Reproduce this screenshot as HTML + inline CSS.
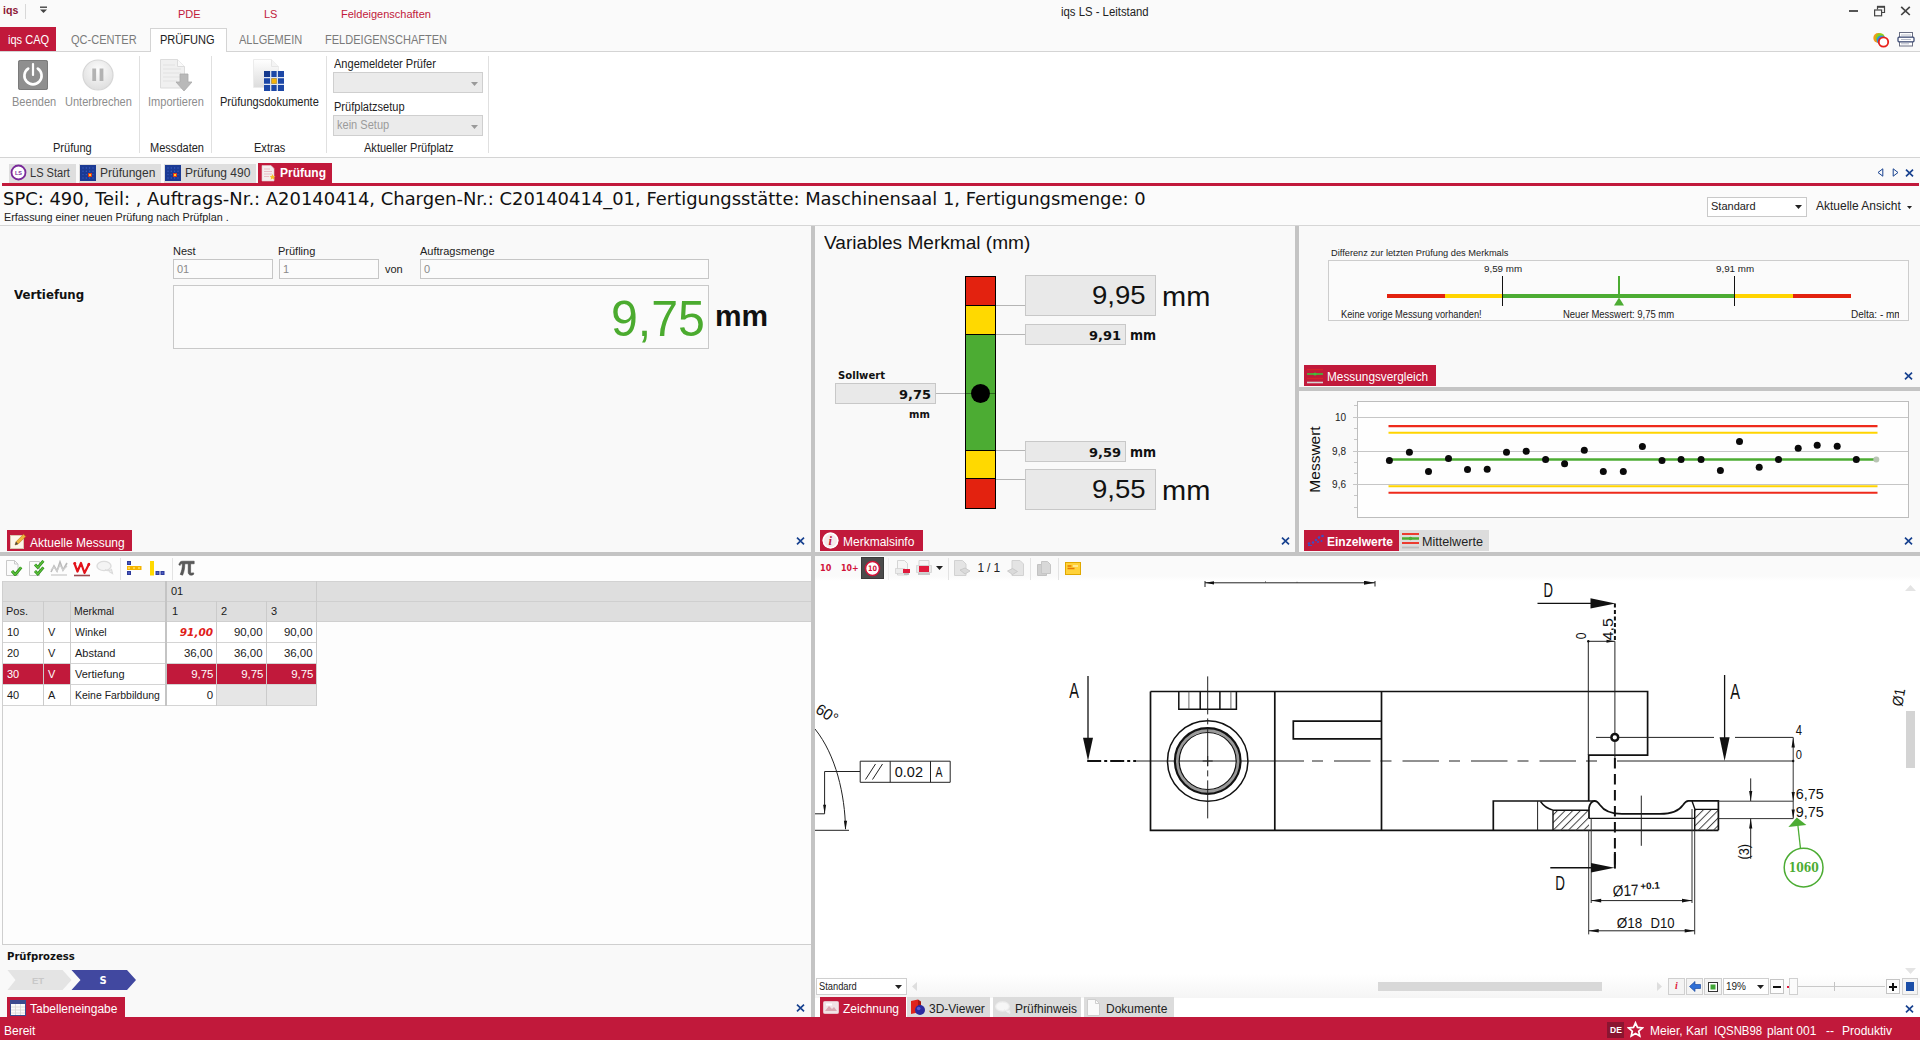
<!DOCTYPE html>
<html lang="de">
<head>
<meta charset="utf-8">
<title>iqs LS - Leitstand</title>
<style>
*{box-sizing:border-box;margin:0;padding:0}
html,body{width:1920px;height:1040px;overflow:hidden;background:#fbfbfb;font-family:"Liberation Sans",sans-serif;font-size:12px;color:#1a1a1a}
.a{position:absolute;white-space:nowrap}
.t{position:absolute;white-space:nowrap;line-height:1;transform-origin:0 0}
.crim{background:#c1193b}
.dj{font-family:"DejaVu Sans",sans-serif;font-weight:bold}
#ribbon .t,#ribbontabs .t{transform:scaleX(.92)}
.xb{position:absolute}

.split{position:absolute;background:#c4c4c4}
.x{position:absolute;width:9px;height:9px}
.ptab{position:absolute;height:21px;color:#fff;background:#c1193b;font-size:12px;line-height:22px;white-space:nowrap}
.gtab{position:absolute;height:21px;color:#222;background:#dcdcdc;font-size:12px;line-height:22px;white-space:nowrap}
.inp{position:absolute;border:1px solid #c6c6c6;background:#fbfbfb;color:#8a8a8a;font-size:11px;line-height:19px;padding-left:3px}
.vbox{position:absolute;background:#e9e9e9;border:1px solid #c8c8c8;text-align:right;white-space:nowrap}
</style>
</head>
<body>
<!-- TITLEBAR -->
<div id="titlebar" class="a" style="left:0;top:0;width:1920px;height:27px;background:#fafafa">
  <div class="t" style="left:3px;top:4.5px;font-size:11.5px;font-weight:bold;color:#8c1735;transform:scaleX(.92)">iqs</div>
  <div class="a" style="left:25px;top:4px;width:1px;height:15px;background:#d8d8d8"></div>
  <svg class="a" style="left:39px;top:6px" width="9" height="8" viewBox="0 0 9 8"><rect x="1" y="0.5" width="7" height="1.4" fill="#444"/><path d="M1 3.5h7L4.5 7z" fill="#444"/></svg>
  <div class="t" style="left:178px;top:9px;font-size:11px;color:#c1193b">PDE</div>
  <div class="t" style="left:264px;top:9px;font-size:11px;color:#c1193b">LS</div>
  <div class="t" style="left:341px;top:9px;font-size:11px;color:#c1193b">Feldeigenschaften</div>
  <div class="t" style="left:1061px;top:5.5px;font-size:12px;color:#222;transform:scaleX(.945)">iqs LS - Leitstand</div>
  <div class="a" style="left:1849px;top:10px;width:9px;height:2px;background:#555"></div>
  <svg class="a" style="left:1873px;top:5px" width="13" height="12" viewBox="0 0 13 12"><path d="M4.500 4.500V1.800H11.500V7.500H8.500" fill="none" stroke="#444" stroke-width="1.200"/><path d="M4 1.700H12" stroke="#444" stroke-width="1.800"/><rect x="1.600" y="5" width="7" height="5.800" fill="none" stroke="#444" stroke-width="1.200"/></svg>
  <svg class="a" style="left:1900px;top:6px" width="11" height="10" viewBox="0 0 11 10"><path d="M1.200 0.800L9.800 9M9.800 0.800L1.200 9" stroke="#444" stroke-width="1.700" fill="none"/></svg>
</div>
<!-- RIBBON TABS -->
<div id="ribbontabs" class="a" style="left:0;top:27px;width:1920px;height:25px;background:#fafafa;border-bottom:1px solid #d4d4d4">
  <div class="a crim" style="left:0;top:0;width:56px;height:24px"></div>
  <div class="t" style="left:8px;top:7px;font-size:12px;color:#fff">iqs CAQ</div>
  <div class="t" style="left:71px;top:7px;font-size:12px;color:#7a7a7a">QC-CENTER</div>
  <div class="a" style="left:150px;top:1px;width:77px;height:24px;background:#fff;border:1px solid #d4d4d4;border-bottom:none"></div>
  <div class="t" style="left:160px;top:7px;font-size:12px;color:#222">PRÜFUNG</div>
  <div class="t" style="left:239px;top:7px;font-size:12px;color:#7a7a7a">ALLGEMEIN</div>
  <div class="t" style="left:325px;top:7px;font-size:12px;color:#7a7a7a">FELDEIGENSCHAFTEN</div>
  <svg class="a" style="left:1872px;top:4px" width="19" height="18" viewBox="0 0 19 18"><circle cx="6.300" cy="7" r="5" fill="#f39a1e"/><circle cx="8.200" cy="6.800" r="4.600" fill="#8fd018"/><circle cx="9.300" cy="9" r="4.600" fill="#2f8fe0"/><circle cx="11.500" cy="11" r="4.700" fill="#fff" stroke="#e8201a" stroke-width="1.800"/></svg>
  <svg class="a" style="left:1897px;top:4px" width="18" height="16" viewBox="0 0 18 16"><rect x="2.500" y="1.500" width="13" height="5" fill="#fff" stroke="#6a6f84" stroke-width="1"/><rect x="2.500" y="10.500" width="13" height="4.500" fill="#fff" stroke="#6a6f84" stroke-width="1"/><rect x="1" y="6.200" width="16" height="4.600" rx="1" fill="#fff" stroke="#3f4c74" stroke-width="1.300"/><path d="M4 4h10M4 8.500h10M4 12.800h8" stroke="#b0b4c2" stroke-width="0.900"/></svg>
</div>
<!-- RIBBON BODY -->
<div id="ribbon" class="a" style="left:0;top:52px;width:1920px;height:106px;background:#fff;border-bottom:1px solid #d4d4d4">
  <!-- Beenden icon -->
  <svg class="a" style="left:18px;top:8px" width="30" height="30" viewBox="0 0 30 30"><rect x="0" y="0" width="30" height="30" rx="2" fill="#8f8f8f"/><rect x="0.5" y="0.5" width="29" height="29" rx="2" fill="none" stroke="#7a7a7a"/><path d="M10.2 8.6a8.6 8.6 0 1 0 9.6 0" fill="none" stroke="#fff" stroke-width="2.6" stroke-linecap="round"/><rect x="13.9" y="3" width="2.2" height="13" rx="1" fill="#fff"/></svg>
  <div class="t" style="left:12px;top:44px;font-size:12px;color:#8d8d8d">Beenden</div>
  <!-- Unterbrechen icon -->
  <svg class="a" style="left:82px;top:7px" width="32" height="32" viewBox="0 0 32 32"><defs><radialGradient id="pg" cx="50%" cy="35%" r="65%"><stop offset="0" stop-color="#fdfdfd"/><stop offset="1" stop-color="#dedede"/></radialGradient></defs><circle cx="16" cy="16" r="15" fill="url(#pg)" stroke="#d6d6d6" stroke-width="1.2"/><rect x="10.3" y="9.5" width="3.8" height="12.5" fill="#b3b3b3"/><rect x="17.6" y="9.5" width="3.8" height="12.5" fill="#b3b3b3"/></svg>
  <div class="t" style="left:65px;top:44px;font-size:12px;color:#8d8d8d">Unterbrechen</div>
  <div class="a" style="left:139px;top:4px;width:1px;height:97px;background:#e0e0e0"></div>
  <!-- Importieren icon -->
  <svg class="a" style="left:160px;top:7px" width="32" height="34" viewBox="0 0 32 34"><path d="M0.5 0.5h17l7 7v21.5h-24z" fill="#f0f0f0" stroke="#dcdcdc"/><path d="M17.5 0.5v7h7" fill="#fafafa" stroke="#dcdcdc"/><g stroke="#e2e2e2" stroke-width="1"><path d="M3 6h12M3 10h18M3 14h18M3 18h18M3 22h14"/></g><path d="M20 15h8v8h4l-8 9-8-9h4z" fill="#b9b9b9" stroke="#a9a9a9" stroke-width="0.8"/></svg>
  <div class="t" style="left:148px;top:44px;font-size:12px;color:#8d8d8d">Importieren</div>
  <div class="a" style="left:211px;top:4px;width:1px;height:97px;background:#e0e0e0"></div>
  <!-- Pruefungsdokumente icon -->
  <svg class="a" style="left:252px;top:6px" width="34" height="34" viewBox="0 0 34 34"><defs><linearGradient id="dg" x1="0" y1="0" x2="0" y2="1"><stop offset="0" stop-color="#ffffff"/><stop offset="1" stop-color="#dcdcdc"/></linearGradient></defs><path d="M1.5 1.5h18l7 7v21h-25z" fill="url(#dg)" stroke="#ececec"/><path d="M19.5 1.5v7h7" fill="#f4f4f4" stroke="#e6e6e6"/><rect x="12" y="13" width="20" height="20" fill="#1c47a6"/><g fill="#15398d"><rect x="12" y="13" width="6" height="6"/></g><g stroke="#dfe6f3" stroke-width="1.3"><path d="M18.7 13v20M25.3 13v20M12 19.7h20M12 26.3h20"/></g><rect x="19.4" y="20.4" width="5.3" height="5.3" fill="#f5b20a"/></svg>
  <div class="t" style="left:220px;top:44px;font-size:12px;color:#222">Prüfungsdokumente</div>
  <div class="a" style="left:326px;top:4px;width:1px;height:97px;background:#e0e0e0"></div>
  <div class="t" style="left:334px;top:6px;font-size:12px;color:#222">Angemeldeter Prüfer</div>
  <div class="a" style="left:333px;top:20px;width:150px;height:21px;background:#ebebeb;border:1px solid #cfcfcf"></div>
  <svg class="a" style="left:471px;top:30px" width="7" height="4" viewBox="0 0 7 4"><path d="M0 0h7L3.5 4z" fill="#9a9a9a"/></svg>
  <div class="t" style="left:334px;top:49px;font-size:12px;color:#222">Prüfplatzsetup</div>
  <div class="a" style="left:333px;top:63px;width:150px;height:21px;background:#ebebeb;border:1px solid #cfcfcf"></div>
  <div class="t" style="left:337px;top:67px;font-size:12px;color:#9b9b9b">kein Setup</div>
  <svg class="a" style="left:471px;top:73px" width="7" height="4" viewBox="0 0 7 4"><path d="M0 0h7L3.5 4z" fill="#9a9a9a"/></svg>
  <div class="a" style="left:488px;top:4px;width:1px;height:97px;background:#e0e0e0"></div>
  <div class="t" style="left:53px;top:90px;font-size:12px;color:#222">Prüfung</div>
  <div class="t" style="left:150px;top:90px;font-size:12px;color:#222">Messdaten</div>
  <div class="t" style="left:254px;top:90px;font-size:12px;color:#222">Extras</div>
  <div class="t" style="left:364px;top:90px;font-size:12px;color:#222">Aktueller Prüfplatz</div>
</div>
<!-- DOC TABS -->
<div id="doctabs" class="a" style="left:0;top:158px;width:1920px;height:28px;background:#fafafa">
  <div class="a" style="left:9px;top:6px;width:67px;height:19px;background:#dedede"></div>
  <svg class="a" style="left:10px;top:6px" width="17" height="17" viewBox="0 0 17 17"><circle cx="8.5" cy="8.5" r="7" fill="#fff" stroke="#7a2a9a" stroke-width="1.8"/><text x="8.5" y="10.6" font-size="5.5" font-weight="bold" fill="#7a2a9a" text-anchor="middle" font-family="Liberation Sans, sans-serif">LS</text></svg>
  <div class="t" style="left:30px;top:9px;font-size:12px;color:#333;transform:scaleX(.92)">LS Start</div>
  <div class="a" style="left:79px;top:6px;width:82px;height:19px;background:#dedede"></div>
  <svg class="a" style="left:80px;top:7px" width="16" height="16" viewBox="0 0 16 16"><rect width="16" height="16" fill="#1b3a94"/><g fill="#3a5cc0"><circle cx="3" cy="3" r="0.7"/><circle cx="6.3" cy="3" r="0.7"/><circle cx="9.6" cy="3" r="0.7"/><circle cx="13" cy="3" r="0.7"/><circle cx="3" cy="6.3" r="0.7"/><circle cx="6.3" cy="6.3" r="0.7"/><circle cx="9.6" cy="6.3" r="0.7"/><circle cx="13" cy="6.3" r="0.7"/><circle cx="3" cy="9.6" r="0.7"/><circle cx="6.3" cy="9.6" r="0.7"/><circle cx="13" cy="9.6" r="0.7"/><circle cx="3" cy="13" r="0.7"/><circle cx="6.3" cy="13" r="0.7"/><circle cx="9.6" cy="13" r="0.7"/><circle cx="13" cy="13" r="0.7"/></g><rect x="8" y="8" width="4" height="4" fill="#e0361c"/><rect x="9" y="9" width="2" height="2" fill="#ffd21f"/></svg>
  <div class="t" style="left:100px;top:9px;font-size:12px;color:#333">Prüfungen</div>
  <div class="a" style="left:164px;top:6px;width:92px;height:19px;background:#dedede"></div>
  <svg class="a" style="left:165px;top:7px" width="16" height="16" viewBox="0 0 16 16"><rect width="16" height="16" fill="#1b3a94"/><g fill="#3a5cc0"><circle cx="3" cy="3" r="0.7"/><circle cx="6.3" cy="3" r="0.7"/><circle cx="9.6" cy="3" r="0.7"/><circle cx="13" cy="3" r="0.7"/><circle cx="3" cy="6.3" r="0.7"/><circle cx="6.3" cy="6.3" r="0.7"/><circle cx="9.6" cy="6.3" r="0.7"/><circle cx="13" cy="6.3" r="0.7"/><circle cx="3" cy="9.6" r="0.7"/><circle cx="6.3" cy="9.6" r="0.7"/><circle cx="13" cy="9.6" r="0.7"/><circle cx="3" cy="13" r="0.7"/><circle cx="6.3" cy="13" r="0.7"/><circle cx="9.6" cy="13" r="0.7"/><circle cx="13" cy="13" r="0.7"/></g><rect x="8" y="8" width="4" height="4" fill="#e0361c"/><rect x="9" y="9" width="2" height="2" fill="#ffd21f"/></svg>
  <div class="t" style="left:185px;top:9px;font-size:12px;color:#333">Prüfung 490</div>
  <div class="a crim" style="left:258px;top:5px;width:74px;height:21px"></div>
  <svg class="a" style="left:261px;top:7px" width="16" height="17" viewBox="0 0 16 17"><path d="M1 0.5h9l3 3v12.5h-12z" fill="#f4eeee" stroke="#e3c9cf" stroke-width="0.6"/><g stroke="#e7b7c0" stroke-width="0.9"><path d="M3 4h6M3 6.5h8M3 9h8M3 11.5h5"/></g><path d="M11.5 9l0.9 2 2.1 0.2-1.6 1.4 0.5 2.1-1.9-1.1-1.9 1.1 0.5-2.1-1.6-1.4 2.1-0.2z" fill="#f6c22a"/></svg>
  <div class="t" style="left:280px;top:9px;font-size:12px;color:#fff;font-weight:bold">Prüfung</div>
  <div class="a crim" style="left:2px;top:25px;width:1917px;height:3px"></div>
  <svg class="a" style="left:1877px;top:10px" width="7" height="9" viewBox="0 0 7 9"><path d="M5.8 0.8v7.4L1 4.5z" fill="none" stroke="#17418f" stroke-width="1"/></svg>
  <svg class="a" style="left:1892px;top:10px" width="7" height="9" viewBox="0 0 7 9"><path d="M1.2 0.8v7.4L6 4.5z" fill="none" stroke="#17418f" stroke-width="1"/></svg>
  <svg class="a" style="left:1905px;top:11px" width="9" height="8" viewBox="0 0 9 8"><path d="M1 0.7L8 7.3M8 0.7L1 7.3" stroke="#17418f" stroke-width="1.7" fill="none"/></svg>
</div>
<!-- HEADER -->
<div id="header" class="a" style="left:0;top:186px;width:1920px;height:40px;background:#fbfbfb;border-bottom:1px solid #d6d6d6">
  <div class="t" id="spc" style="left:3px;top:4px;font-size:18.5px;color:#111;transform:scaleX(.969);font-family:'DejaVu Sans',sans-serif">SPC: 490, Teil: , Auftrags-Nr.: A20140414, Chargen-Nr.: C20140414_01, Fertigungsstätte: Maschinensaal 1, Fertigungsmenge: 0</div>
  <div class="t" id="erf" style="left:4px;top:26px;transform:scaleX(.98);font-size:11px;color:#222">Erfassung einer neuen Prüfung nach Prüfplan .</div>
  <div class="a" style="left:1707px;top:11px;width:100px;height:20px;background:#fff;border:1px solid #c9c9c9"></div>
  <div class="t" style="left:1711px;top:15px;font-size:11px;color:#222">Standard</div>
  <svg class="a" style="left:1795px;top:19px" width="7" height="4" viewBox="0 0 7 4"><path d="M0 0h7L3.5 4z" fill="#222"/></svg>
  <div class="t" style="left:1816px;top:14px;font-size:12px;color:#222">Aktuelle Ansicht</div>
  <svg class="a" style="left:1907px;top:20px" width="5" height="3" viewBox="0 0 5 3"><path d="M0 0h5L2.5 3z" fill="#222"/></svg>
</div>
<!-- PANELS -->
<div id="p1" class="a" style="left:0;top:226px;width:811px;height:326px;background:#f9f9f9">
  <div class="t" style="left:173px;top:20px;font-size:11px;color:#222">Nest</div>
  <div class="t" style="left:278px;top:20px;font-size:11px;color:#222">Prüfling</div>
  <div class="t" style="left:420px;top:20px;font-size:11px;color:#222">Auftragsmenge</div>
  <div class="inp" style="left:173px;top:33px;width:100px;height:20px">01</div>
  <div class="inp" style="left:279px;top:33px;width:100px;height:20px">1</div>
  <div class="t" style="left:385px;top:38px;font-size:11px;color:#222">von</div>
  <div class="inp" style="left:420px;top:33px;width:289px;height:20px">0</div>
  <div class="t dj" id="vert" style="left:14px;top:62px;font-size:13px;color:#111;transform:scaleX(.905)">Vertiefung</div>
  <div class="a" style="left:173px;top:59px;width:536px;height:64px;border:1px solid #c9c9c9;background:#fbfbfb"></div>
  <div class="t" id="big975" style="left:611px;top:68px;font-size:50px;color:#4bab2f;transform:scaleX(.965)">9,75</div>
  <div class="t" id="bigmm" style="left:715px;top:76px;transform:scaleX(1.03);font-size:29px;font-weight:bold;color:#111">mm</div>
  <div class="ptab" style="left:7px;top:304px;width:125px;height:21px"></div>
  <svg class="a" style="left:10px;top:307px" width="17" height="16" viewBox="0 0 17 16"><rect x="0.5" y="2.5" width="13" height="13" fill="#fdf6ea" stroke="#d9c7b0"/><path d="M5 12l1-3.2 7.5-7.5 2.2 2.2-7.5 7.5z" fill="#f0b43c" stroke="#b87a1c" stroke-width="0.6"/><path d="M5 12l1-3.2 2.2 2.2z" fill="#444"/></svg>
  <div class="t" style="left:30px;top:310.5px;font-size:12px;color:#fff">Aktuelle Messung</div>
  <svg class="a" style="left:796px;top:311px" width="9" height="8" viewBox="0 0 9 8"><path d="M1 0.7L8 7.3M8 0.7L1 7.3" stroke="#17418f" stroke-width="1.7" fill="none"/></svg>
</div>
<div id="p2" class="a" style="left:815px;top:226px;width:480px;height:326px;background:#f9f9f9">
  <div class="t" id="vm" style="left:9px;top:8px;font-size:18px;color:#111;transform:scaleX(1.06)">Variables Merkmal (mm)</div>
  <!-- bar -->
  <div class="a" style="left:150px;top:50px;width:31px;height:233px;background:#000"></div>
  <div class="a" style="left:151px;top:51px;width:29px;height:28px;background:#e3220f"></div>
  <div class="a" style="left:151px;top:80px;width:29px;height:28px;background:#ffd900"></div>
  <div class="a" style="left:151px;top:109px;width:29px;height:115px;background:#4cac33"></div>
  <div class="a" style="left:151px;top:225px;width:29px;height:27px;background:#ffd900"></div>
  <div class="a" style="left:151px;top:253px;width:29px;height:29px;background:#e3220f"></div>
  <div class="a" style="left:151px;top:167px;width:29px;height:1px;background:#2d6a1e"></div>
  <div class="a" style="left:156px;top:158px;width:19px;height:19px;border-radius:50%;background:#000"></div>
  <!-- connectors -->
  <div class="a" style="left:181px;top:79px;width:29px;height:1px;background:#b5b5b5"></div>
  <div class="a" style="left:181px;top:108px;width:29px;height:1px;background:#b5b5b5"></div>
  <div class="a" style="left:181px;top:224px;width:29px;height:1px;background:#b5b5b5"></div>
  <div class="a" style="left:181px;top:253px;width:29px;height:1px;background:#b5b5b5"></div>
  <div class="a" style="left:121px;top:167px;width:29px;height:1px;background:#b5b5b5"></div>
  <!-- boxes -->
  <div class="vbox" style="left:210px;top:49px;width:131px;height:41px"></div>
  <div class="t" id="v995" style="left:277px;top:56px;font-size:26.5px;color:#111;transform:scaleX(1.04)">9,95</div>
  <div class="t" id="mm1" style="left:347px;top:57px;font-size:28px;color:#111;transform:scaleX(1.035)">mm</div>
  <div class="vbox" style="left:210px;top:98px;width:101px;height:21px"></div>
  <div class="t dj" id="v991" style="left:274px;top:103px;font-size:13px;font-weight:bold;color:#111">9,91</div>
  <div class="t dj" id="mm2" style="left:315px;top:103px;font-size:13.5px;font-weight:bold;color:#111;transform:scaleX(.93)">mm</div>
  <div class="vbox" style="left:210px;top:215px;width:101px;height:21px"></div>
  <div class="t dj" id="v959" style="left:274px;top:220px;font-size:13px;font-weight:bold;color:#111">9,59</div>
  <div class="t dj" id="mm3" style="left:315px;top:220px;font-size:13.5px;font-weight:bold;color:#111;transform:scaleX(.93)">mm</div>
  <div class="vbox" style="left:210px;top:243px;width:131px;height:41px"></div>
  <div class="t" id="v955" style="left:277px;top:250px;font-size:26.5px;color:#111;transform:scaleX(1.04)">9,55</div>
  <div class="t" id="mm4" style="left:347px;top:251px;font-size:28px;color:#111;transform:scaleX(1.035)">mm</div>
  <!-- sollwert -->
  <div class="t dj" id="soll" style="left:23px;top:144px;font-size:10.5px;font-weight:bold;color:#111;transform:scaleX(.96)">Sollwert</div>
  <div class="vbox" style="left:20px;top:157px;width:101px;height:21px"></div>
  <div class="t dj" id="v975" style="left:84px;top:162px;font-size:13px;font-weight:bold;color:#111">9,75</div>
  <div class="t dj" id="mm5" style="left:94px;top:184px;font-size:10px;font-weight:bold;color:#111">mm</div>
  <!-- tab -->
  <div class="ptab" style="left:5px;top:304px;width:103px"></div>
  <svg class="a" style="left:7px;top:306px" width="17" height="17" viewBox="0 0 17 17"><circle cx="8.5" cy="8.5" r="8" fill="#f5e9eb"/><circle cx="8.5" cy="8.5" r="7.2" fill="none" stroke="#fff" stroke-width="1.4"/><text x="8.3" y="13" font-size="12.5" font-weight="bold" font-style="italic" fill="#c1193b" text-anchor="middle" font-family="Liberation Serif, serif">i</text></svg>
  <div class="t" style="left:28px;top:310px;font-size:12px;color:#fff">Merkmalsinfo</div>
  <svg class="a" style="left:466px;top:311px" width="9" height="8" viewBox="0 0 9 8"><path d="M1 0.7L8 7.3M8 0.7L1 7.3" stroke="#17418f" stroke-width="1.7" fill="none"/></svg>
</div>
<div id="p3" class="a" style="left:1299px;top:226px;width:621px;height:161px;background:#f9f9f9">
  <div class="t" id="diff" style="left:32px;top:22px;font-size:9.5px;color:#222;transform:scaleX(.975)">Differenz zur letzten Prüfung des Merkmals</div>
  <div class="a" style="left:29px;top:34px;width:581px;height:61px;border:1px solid #cdcdcd;background:#fbfbfb"></div>
  <div class="t" id="l959" style="left:185px;top:38px;font-size:9.5px;color:#222;transform:scaleX(1.03)">9,59 mm</div>
  <div class="t" id="l991" style="left:417px;top:38px;font-size:9.5px;color:#222;transform:scaleX(1.03)">9,91 mm</div>
  <div class="a" style="left:88px;top:68px;width:58px;height:4px;background:#e3220f"></div>
  <div class="a" style="left:146px;top:68px;width:58px;height:4px;background:#ffd400"></div>
  <div class="a" style="left:204px;top:68px;width:232px;height:4px;background:#4cac33"></div>
  <div class="a" style="left:436px;top:68px;width:58px;height:4px;background:#ffd400"></div>
  <div class="a" style="left:494px;top:68px;width:58px;height:4px;background:#e3220f"></div>
  <div class="a" style="left:203px;top:50px;width:1px;height:30px;background:#111"></div>
  <div class="a" style="left:435px;top:50px;width:1px;height:30px;background:#111"></div>
  <div class="a" style="left:319px;top:50px;width:2px;height:22px;background:#4cac33"></div>
  <svg class="a" style="left:314px;top:71px" width="12" height="9" viewBox="0 0 12 9"><path d="M6 0.5L11 8.5H1z" fill="#4cac33"/></svg>
  <div class="t" id="keine" style="left:42px;top:83.5px;font-size:10px;color:#222;transform:scaleX(.927)">Keine vorige Messung vorhanden!</div>
  <div class="t" id="neuer" style="left:264px;top:83.5px;font-size:10px;color:#222;transform:scaleX(.948)">Neuer Messwert: 9,75 mm</div>
  <div class="a" style="left:552px;top:80px;width:48px;height:14px;overflow:hidden"><div class="t" id="delta" style="left:0;top:3.5px;font-size:10px;color:#222">Delta: - mm</div></div>
  <div class="ptab" style="left:5px;top:139px;width:132px"></div>
  <svg class="a" style="left:7px;top:141px" width="18" height="18" viewBox="0 0 18 18"><path d="M1 2.5h16" stroke="#d5232d" stroke-width="1.4"/><path d="M1 7h16" stroke="#3fbf3a" stroke-width="1.6"/><circle cx="9" cy="7" r="1.6" fill="#3fbf3a"/><path d="M1 11.5h16" stroke="#d5232d" stroke-width="1.4"/><path d="M1 15.5h16" stroke="#d4d4d4" stroke-width="1.6"/></svg>
  <div class="t" id="mvgl" style="transform:scaleX(.985);left:28px;top:145px;font-size:12px;color:#fff">Messungsvergleich</div>
  <svg class="a" style="left:605px;top:146px" width="9" height="8" viewBox="0 0 9 8"><path d="M1 0.7L8 7.3M8 0.7L1 7.3" stroke="#17418f" stroke-width="1.7" fill="none"/></svg>
</div>
<div id="p4" class="a" style="left:1299px;top:391px;width:621px;height:161px;background:#f9f9f9">
  <svg class="a" style="left:0;top:0" width="621" height="161" viewBox="0 0 621 161">
    <rect x="58.5" y="10.5" width="551" height="116" fill="#fefefe" stroke="#bdbdbd"/>
    <path d="M54 26.5H609" stroke="#c6c6c6" stroke-width="1"/><path d="M54 60.5H609" stroke="#c6c6c6" stroke-width="1"/><path d="M54 93.5H609" stroke="#c6c6c6" stroke-width="1"/><path d="M55 14.5H58" stroke="#c6c6c6" stroke-width="1"/><path d="M55 37.5H58" stroke="#c6c6c6" stroke-width="1"/><path d="M55 48.5H58" stroke="#c6c6c6" stroke-width="1"/><path d="M55 71.5H58" stroke="#c6c6c6" stroke-width="1"/><path d="M55 82.5H58" stroke="#c6c6c6" stroke-width="1"/><path d="M55 104.5H58" stroke="#c6c6c6" stroke-width="1"/><path d="M55 116.5H58" stroke="#c6c6c6" stroke-width="1"/>
    <path d="M89.5 35.1H578.5" stroke="#ee2a1b" stroke-width="2.1"/><path d="M89.5 41.7H578.5" stroke="#ffd400" stroke-width="2.1"/><path d="M89.5 95.2H578.5" stroke="#ffd400" stroke-width="2.1"/><path d="M89.5 101.8H578.5" stroke="#ee2a1b" stroke-width="2.1"/><path d="M89.5 68.4H578.5" stroke="#4cac33" stroke-width="2.5"/>
    <g fill="#0a0a0a"><circle cx="90.4" cy="69.4" r="3.5"/><circle cx="110.4" cy="61.2" r="3.5"/><circle cx="129.5" cy="80.5" r="3.5"/><circle cx="149.5" cy="67.4" r="3.5"/><circle cx="168.5" cy="78.6" r="3.5"/><circle cx="188.2" cy="78.2" r="3.5"/><circle cx="207.5" cy="61.2" r="3.5"/><circle cx="227.2" cy="60.2" r="3.5"/><circle cx="246.6" cy="68.4" r="3.5"/><circle cx="265.6" cy="72.7" r="3.5"/><circle cx="285.3" cy="59.2" r="3.5"/><circle cx="304.3" cy="80.5" r="3.5"/><circle cx="324.3" cy="80.5" r="3.5"/><circle cx="343.4" cy="55.6" r="3.5"/><circle cx="363.0" cy="69.4" r="3.5"/><circle cx="382.1" cy="68.4" r="3.5"/><circle cx="402.1" cy="68.4" r="3.5"/><circle cx="421.4" cy="79.6" r="3.5"/><circle cx="440.5" cy="50.4" r="3.5"/><circle cx="460.2" cy="76.3" r="3.5"/><circle cx="479.5" cy="68.4" r="3.5"/><circle cx="499.2" cy="57.2" r="3.5"/><circle cx="518.2" cy="54.3" r="3.5"/><circle cx="538.2" cy="55.3" r="3.5"/><circle cx="557.3" cy="68.4" r="3.5"/></g>
    <circle cx="577.3" cy="68.4" r="3" fill="#b9c4b4"/>
    <text x="47" y="30.3" font-size="10" fill="#222" text-anchor="end" font-family="Liberation Sans, sans-serif">10</text>
    <text x="47" y="63.7" font-size="10" fill="#222" text-anchor="end" font-family="Liberation Sans, sans-serif">9,8</text>
    <text x="47" y="97.1" font-size="10" fill="#222" text-anchor="end" font-family="Liberation Sans, sans-serif">9,6</text>
    <text transform="translate(20.500 68.500) rotate(-90)" font-size="15.5" fill="#111" text-anchor="middle" font-family="Liberation Sans, sans-serif">Messwert</text>
  </svg>
  <div class="ptab" style="left:5px;top:139px;width:95px"></div>
  <svg class="a" style="left:8px;top:142px" width="18" height="14" viewBox="0 0 18 14"><g fill="#3b4fc4"><circle cx="2" cy="10.5" r="1.3"/><circle cx="6" cy="9.5" r="1.2"/><circle cx="9" cy="7" r="1.2"/><circle cx="12" cy="4.5" r="1.3"/><circle cx="15.5" cy="3" r="1.3"/><circle cx="11" cy="9" r="1"/><circle cx="14.5" cy="8" r="1"/></g><path d="M1 12.5h4" stroke="#3b4fc4" stroke-width="1"/></svg>
  <div class="t" id="einz" style="left:28px;top:145px;font-size:12px;color:#fff;font-weight:bold">Einzelwerte</div>
  <div class="gtab" style="left:100px;top:139px;width:90px"></div>
  <svg class="a" style="left:103px;top:141px" width="17" height="18" viewBox="0 0 17 18"><path d="M0 2h17" stroke="#ee2a1b" stroke-width="1.8"/><path d="M0 6.5h17" stroke="#4cac33" stroke-width="2.5"/><circle cx="8.5" cy="6.5" r="1.8" fill="#4cac33"/><path d="M0 11h17" stroke="#ee2a1b" stroke-width="1.8"/><path d="M0 15.5h17" stroke="#bdbdbd" stroke-width="1.8"/></svg>
  <div class="t" id="mitt" style="left:123px;top:145px;font-size:12px;color:#222;transform:scaleX(1.05)">Mittelwerte</div>
  <svg class="a" style="left:605px;top:146px" width="9" height="8" viewBox="0 0 9 8"><path d="M1 0.7L8 7.3M8 0.7L1 7.3" stroke="#17418f" stroke-width="1.7" fill="none"/></svg>
</div>
<div id="p5" class="a" style="left:0;top:556px;width:811px;height:462px;background:#fdfdfd">
  
  <svg class="a" style="left:6px;top:4px" width="17" height="16" viewBox="0 0 17 16"><path d="M0.5 0.5h8l3.5 3.5v11.5h-11.5z" fill="#fbfbfb" stroke="#c9c9c9"/><path d="M8.5 0.5v3.5h3.5" fill="none" stroke="#c9c9c9"/><path d="M6 11l3.2 3.6 6-7.2" fill="none" stroke="#2e8a1e" stroke-width="3"/><path d="M6 11l3.2 3.6 6-7.2" fill="none" stroke="#5cc43a" stroke-width="1.4"/></svg>
  <svg class="a" style="left:29px;top:4px" width="17" height="16" viewBox="0 0 17 16"><path d="M0.5 1.5h10v14h-10z" fill="#fbfbfb" stroke="#c9c9c9"/><path d="M6 4.5l2.8 3 5.6-6.6" fill="none" stroke="#2e8a1e" stroke-width="2.8"/><path d="M6 11l2.8 3 5.6-6.6" fill="none" stroke="#2e8a1e" stroke-width="2.8"/><path d="M6 4.5l2.8 3 5.6-6.6M6 11l2.8 3 5.6-6.6" fill="none" stroke="#5cc43a" stroke-width="1.2"/></svg>
  <svg class="a" style="left:50px;top:4px" width="18" height="16" viewBox="0 0 18 16"><path d="M1 12l3-6 3 5 3-9 3 8 4-7" fill="none" stroke="#b9b9b9" stroke-width="1.6"/><path d="M1 10l3-3 3 4 3-6 3 5 4-4" fill="none" stroke="#cfcfcf" stroke-width="1.2"/><path d="M1 15h16" stroke="#cfcfcf" stroke-width="1.4"/></svg>
  <svg class="a" style="left:73px;top:4px" width="18" height="17" viewBox="0 0 18 17"><path d="M1.5 3.5l3 8 3.5-8.5 3.5 10 4.5-9" fill="none" stroke="#e3121a" stroke-width="2.2" stroke-linejoin="round" stroke-linecap="round"/><circle cx="1.8" cy="3.5" r="1.4" fill="#e3121a"/><circle cx="15.8" cy="4.5" r="1.4" fill="#e3121a"/><path d="M1 15.5h16" stroke="#9a4a50" stroke-width="1.6"/></svg>
  <svg class="a" style="left:96px;top:4px" width="18" height="16" viewBox="0 0 18 16"><ellipse cx="8" cy="6" rx="7" ry="4.6" fill="#f4f4f4" stroke="#dcdcdc" stroke-width="1.4"/><path d="M9 9.5c2.5 2 5 1 6.5 0l1 4-3.5-2" fill="#f4f4f4" stroke="#dcdcdc" stroke-width="1.2"/></svg>
  <div class="a" style="left:120px;top:2px;width:1px;height:22px;background:#e3e3e3"></div>
  <svg class="a" style="left:127px;top:5px" width="15" height="15" viewBox="0 0 15 15"><rect x="0" y="0" width="4" height="4" fill="#2d3b9b"/><rect x="0" y="10" width="4" height="4" fill="#2d3b9b"/><rect x="0" y="5" width="14.5" height="4" fill="#f5b400"/><g fill="#ffd84a"><rect x="1" y="6" width="2" height="2"/><rect x="6" y="6" width="2" height="2"/><rect x="11" y="6" width="2" height="2"/></g><g fill="#2d3b9b" opacity="0.0"><rect/></g><rect x="1.2" y="1.2" width="1.6" height="1.6" fill="#5a6bd0"/><rect x="1.2" y="11.2" width="1.6" height="1.6" fill="#5a6bd0"/></svg>
  <svg class="a" style="left:150px;top:5px" width="15" height="15" viewBox="0 0 15 15"><rect x="0" y="0" width="4" height="14.5" fill="#ffd900"/><rect x="5.5" y="10" width="4" height="4" fill="#2d3b9b"/><rect x="10.5" y="10" width="4" height="4" fill="#2d3b9b"/><rect x="6.7" y="11.2" width="1.6" height="1.6" fill="#5a6bd0"/><rect x="11.7" y="11.2" width="1.6" height="1.6" fill="#5a6bd0"/></svg>
  <div class="a" style="left:172px;top:2px;width:1px;height:22px;background:#e3e3e3"></div>
  <svg class="a" style="left:178px;top:4px" width="17" height="16" viewBox="0 0 17 16"><path d="M0.8 4.8C1.8 1.5 3 1.2 5 1.2H16.2V3.8H12.6V12c0 1.3 1.6 1.5 2.6 0.6l0.8 1.4c-2 2.1-5.8 1.5-5.8-1.8V3.8H6.8c0 4-0.6 8.2-2.2 11.4L2.2 14.4C3.6 11.4 4.4 8 4.4 3.8C3 3.8 2.600 4.200 2.200 5.400Z" fill="#5a5a5a" stroke="#3c3c3c" stroke-width="0.5"/></svg>

  <div class="a" style="left:2px;top:25px;width:809px;height:41px;background:#dedede"></div><div class="a" style="left:2px;top:45px;width:809px;height:1px;background:#cfcfcf"></div><div class="a" style="left:2px;top:65px;width:809px;height:1px;background:#cfcfcf"></div><div class="a" style="left:2px;top:25px;width:809px;height:1px;background:#d2d2d2"></div><div class="a" style="left:3px;top:66px;width:313px;height:83px;background:#fff"></div><div class="a crim" style="left:3px;top:108px;width:40px;height:21px"></div><div class="a crim" style="left:44px;top:108px;width:26px;height:21px"></div><div class="a crim" style="left:167px;top:108px;width:49px;height:21px"></div><div class="a crim" style="left:217px;top:108px;width:49px;height:21px"></div><div class="a crim" style="left:267px;top:108px;width:49px;height:21px"></div><div class="a" style="left:217px;top:129px;width:99px;height:20px;background:#e6e6e6"></div><div class="a" style="left:3px;top:86px;width:314px;height:1px;background:#d4d4d4"></div><div class="a" style="left:3px;top:107px;width:314px;height:1px;background:#d4d4d4"></div><div class="a" style="left:3px;top:128px;width:314px;height:1px;background:#d4d4d4"></div><div class="a" style="left:3px;top:149px;width:314px;height:1px;background:#d4d4d4"></div><div class="a" style="left:43px;top:45px;width:1px;height:105px;background:#cbcbcb"></div><div class="a" style="left:70px;top:45px;width:1px;height:105px;background:#cbcbcb"></div><div class="a" style="left:216px;top:45px;width:1px;height:105px;background:#cbcbcb"></div><div class="a" style="left:266px;top:45px;width:1px;height:105px;background:#cbcbcb"></div><div class="a" style="left:316px;top:25px;width:1px;height:125px;background:#cbcbcb"></div><div class="a" style="left:165px;top:25px;width:2px;height:125px;background:#c4c4c4"></div><div class="a" style="left:2px;top:25px;width:1px;height:364px;background:#cfcfcf"></div><div class="t" style="left:171px;top:30px;font-size:11px;color:#1a1a1a;">01</div><div class="t" style="left:6px;top:50px;font-size:11px;color:#1a1a1a;">Pos.</div><div class="t" id="hmerk" style="left:74px;top:50px;font-size:11px;color:#1a1a1a;;transform:scaleX(.95)">Merkmal</div><div class="t" style="left:172px;top:50px;font-size:11px;color:#1a1a1a;">1</div><div class="t" style="left:221px;top:50px;font-size:11px;color:#1a1a1a;">2</div><div class="t" style="left:271px;top:50px;font-size:11px;color:#1a1a1a;">3</div><div class="t" style="left:7px;top:71px;font-size:11px;color:#1a1a1a;">10</div><div class="t" style="left:48px;top:71px;font-size:11px;color:#1a1a1a;">V</div><div class="t" id="m10" style="left:75px;top:71px;font-size:11px;color:#1a1a1a;transform:scaleX(.96);">Winkel</div><div class="t dj" style="right:598px;top:71px;font-size:10.5px;color:#e0201a;font-style:italic;transform-origin:100% 0">91,00</div><div class="t" style="right:548px;top:71px;font-size:11px;color:#1a1a1a;transform-origin:100% 0;transform:scaleX(1.04);">90,00</div><div class="t" style="right:498px;top:71px;font-size:11px;color:#1a1a1a;transform-origin:100% 0;transform:scaleX(1.04);">90,00</div><div class="t" style="left:7px;top:92px;font-size:11px;color:#1a1a1a;">20</div><div class="t" style="left:48px;top:92px;font-size:11px;color:#1a1a1a;">V</div><div class="t" id="m20" style="left:75px;top:92px;font-size:11px;color:#1a1a1a;transform:scaleX(1.0);">Abstand</div><div class="t" style="right:598px;top:92px;font-size:11px;color:#1a1a1a;transform-origin:100% 0;transform:scaleX(1.04);">36,00</div><div class="t" style="right:548px;top:92px;font-size:11px;color:#1a1a1a;transform-origin:100% 0;transform:scaleX(1.04);">36,00</div><div class="t" style="right:498px;top:92px;font-size:11px;color:#1a1a1a;transform-origin:100% 0;transform:scaleX(1.04);">36,00</div><div class="t" style="left:7px;top:113px;font-size:11px;color:#1a1a1a;color:#fff;">30</div><div class="t" style="left:48px;top:113px;font-size:11px;color:#1a1a1a;color:#fff;">V</div><div class="t" id="m30" style="left:75px;top:113px;font-size:11px;color:#1a1a1a;transform:scaleX(1.0);">Vertiefung</div><div class="t" style="right:598px;top:113px;font-size:11px;color:#1a1a1a;transform-origin:100% 0;color:#fff;transform:scaleX(1.04);">9,75</div><div class="t" style="right:548px;top:113px;font-size:11px;color:#1a1a1a;transform-origin:100% 0;color:#fff;transform:scaleX(1.04);">9,75</div><div class="t" style="right:498px;top:113px;font-size:11px;color:#1a1a1a;transform-origin:100% 0;color:#fff;transform:scaleX(1.04);">9,75</div><div class="t" style="left:7px;top:134px;font-size:11px;color:#1a1a1a;">40</div><div class="t" style="left:48px;top:134px;font-size:11px;color:#1a1a1a;">A</div><div class="t" id="m40" style="left:75px;top:134px;font-size:11px;color:#1a1a1a;transform:scaleX(.95);">Keine Farbbildung</div><div class="t" style="right:598px;top:134px;font-size:11px;color:#1a1a1a;transform-origin:100% 0;transform:scaleX(1.04);">0</div>
  <div class="a" style="left:2px;top:388px;width:809px;height:1px;background:#cfcfcf"></div>
  <div class="a" style="left:0;top:389px;width:811px;height:73px;background:#f9f9f9"></div>
  <div class="t dj" id="pproz" style="transform:scaleX(.96);left:7px;top:395px;font-size:10.5px;color:#111">Prüfprozess</div>
  <svg class="a" style="left:7px;top:414px" width="130" height="20" viewBox="0 0 130 20"><path d="M0.5 0H55.500L64.500 10 55.500 20H0.500L8.500 10Z" fill="#e4e4e4"/><path d="M64.500 0H120L129 10 120 20H64.500L73.500 10Z" fill="#4148a0"/><text x="31" y="13.500" font-size="9.500" font-weight="bold" fill="#c8c8c8" text-anchor="middle" font-family="Liberation Sans, sans-serif">ET</text><text x="96" y="13.800" font-size="10" font-weight="bold" fill="#fff" text-anchor="middle" font-family="DejaVu Sans, sans-serif">S</text></svg>
  <div class="ptab" style="left:7px;top:441px;width:118px;height:21px"></div>
  <svg class="a" style="left:10px;top:444px" width="16" height="16" viewBox="0 0 16 16"><rect x="0.5" y="0.5" width="15" height="15" fill="#fafafa" stroke="#3b4a8f"/><rect x="1" y="1" width="14" height="3" fill="#3b4a8f"/><g stroke="#d6d6d6" stroke-width="0.8"><path d="M1 7h14M1 10h14M1 13h14M5.500 4v11M10.500 4v11"/></g></svg>
  <div class="t" id="tabein" style="left:30px;top:447px;font-size:12px;color:#fff">Tabelleneingabe</div>
  <svg class="a" style="left:796px;top:448px" width="9" height="8" viewBox="0 0 9 8"><path d="M1 0.7L8 7.3M8 0.7L1 7.3" stroke="#17418f" stroke-width="1.7" fill="none"/></svg>
</div>
<div id="p6" class="a" style="left:815px;top:556px;width:1105px;height:462px;background:#fff">
  <svg class="a" style="left:0;top:0" width="1105" height="462" viewBox="815 556 1105 462">
    <path d="M1205 582.8H1375M1205 578.5V587M1375 580V586.5" stroke="#222" stroke-width="1.0" fill="none"/>
    <path d="M1205 582.8l9-1.6v3.2zM1375 582.8l-11-2v4z" fill="#111"/>
    <path d="M1265.5 581.3v1.5M1297 581.8v1" stroke="#444" stroke-width="0.8"/>
    <path d="M815 729C836 755 845 795 845.5 829" stroke="#222" stroke-width="1.0" fill="none"/>
    <path d="M845.5 830.3l-1.6-9.5h3.200z" fill="#111"/>
    <path d="M815 830.3H849M815 813.8H824.6V771.500H860" stroke="#222" stroke-width="1.0" fill="none"/>
    <path d="M824.6 813.8l-1.500-9h3z" fill="#111"/>
    <path d="M860.2 761.2H950.200V782.300H860.200ZM890.200 761.200V782.300M930.500 761.200V782.300" stroke="#222" stroke-width="1" fill="none"/>
    <path d="M865.5 779.5L875.500 764M872.500 779.500L882.500 764" stroke="#222" stroke-width="1" fill="none"/>
    <text x="894.8" y="777" font-size="14.5" fill="#111" font-weight="normal" text-anchor="start" textLength="28.2" lengthAdjust="spacingAndGlyphs" font-family="Liberation Sans, sans-serif">0.02</text>
    <text x="935.5" y="777" font-size="14.5" fill="#111" font-weight="normal" text-anchor="start" textLength="7" lengthAdjust="spacingAndGlyphs" font-family="Liberation Sans, sans-serif">A</text>
    <text x="814.5" y="712" font-size="15.5" fill="#111" font-weight="normal" text-anchor="start" textLength="23" lengthAdjust="spacingAndGlyphs" transform="rotate(33 814.5 712)" font-family="Liberation Sans, sans-serif">60°</text>
    <path d="M1088 676V745" stroke="#111" stroke-width="1.3" fill="none"/>
    <path d="M1088 760.8l-5-23h10z" fill="#111"/>
    <text x="1069.2" y="698.4" font-size="21.6" fill="#111" font-weight="normal" text-anchor="start" textLength="9.7" lengthAdjust="spacingAndGlyphs" font-family="Liberation Sans, sans-serif">A</text>
    <path d="M1087.2 760.9H1136" stroke="#111" stroke-width="2" stroke-dasharray="14 3 3 3" fill="none"/>
    <path d="M1136 761H1304" stroke="#222" stroke-width="1.0" fill="none"/>
    <path d="M1312 761H1608" stroke="#222" stroke-width="1.0" stroke-dasharray="11 11 36.500 10" fill="none"/>
    <path d="M1617 761H1724" stroke="#222" stroke-width="1.0" fill="none"/>
    <path d="M1150.5 691.5H1647.600V755.100H1588.700V801M1150.500 691.500V830.300H1718.400M1274.800 691.500V830.300M1381.500 691.500V830.300" stroke="#111" stroke-width="1.7" fill="none"/>
    <path d="M1381.5 721.200H1293.300V738.900H1381.500" stroke="#111" stroke-width="1.7" fill="none"/>
    <path d="M1178.8 691.500V709.300H1236.400V691.500M1200.200 691.500V709.300M1219.900 691.500V709.300" stroke="#111" stroke-width="1.500" fill="none"/>
    <path d="M1188.9 691.500V709.300M1230.900 691.500V709.300" stroke="#444" stroke-width="0.800" fill="none"/>
    <circle cx="1207.7" cy="761" r="40.2" fill="none" stroke="#111" stroke-width="1.5"/>
    <circle cx="1207.7" cy="761" r="30.6" fill="none" stroke="#9a9a9a" stroke-width="3.4"/>
    <circle cx="1207.7" cy="761" r="32.8" fill="none" stroke="#111" stroke-width="2.2"/>
    <circle cx="1207.7" cy="761" r="28.5" fill="none" stroke="#111" stroke-width="1.2"/>
    <path d="M1207.7 676.400V819" stroke="#222" stroke-width="1.0" stroke-dasharray="38 4 6 4" fill="none"/>
    <path d="M1202.7 761H1212.7M1207.7 756V766" stroke="#222" stroke-width="1.0" fill="none"/>
    <path d="M1493.3 830.300V801H1594" stroke="#111" stroke-width="1.7" fill="none"/>
    <path d="M1537.6 801V830.300" stroke="#222" stroke-width="1.0" fill="none"/>
    <defs><pattern id="hatch" width="5.4" height="5.4" patternUnits="userSpaceOnUse" patternTransform="rotate(-45)"><path d="M0 0.500H5.400" stroke="#444" stroke-width="1"/></pattern></defs>
    <rect x="1553" y="810.2" width="36" height="20" fill="url(#hatch)"/>
    <rect x="1695" y="809.5" width="23.4" height="20.800" fill="url(#hatch)"/>
    <path d="M1540.5 801.500Q1545 808 1553 810.200H1589M1553 810.200V830.300" stroke="#111" stroke-width="1.400" fill="none"/>
    <path d="M1589 818.400V808Q1590 801.500 1594.500 800.800Q1597.500 801 1600 805Q1606 813.900 1622 813.900H1660Q1677 813.900 1683 805Q1685.500 801 1688.500 800.800H1718.400V830.300" stroke="#111" stroke-width="1.7" fill="none"/>
    <path d="M1589 818.400H1694.700M1692 801L1695 809.400H1718.400M1694.700 809.400V830.300" stroke="#111" stroke-width="1.400" fill="none"/>
    <path d="M1588.7 830.300V934.400M1591.200 818.400V903M1692 809V903M1694.700 830.300V934.400" stroke="#333" stroke-width="1.0" fill="none"/>
    <path d="M1641.3 795.600V845.800" stroke="#222" stroke-width="1.0" fill="none"/>
    <path d="M1614.9 603.400V641.300" stroke="#111" stroke-width="2" stroke-dasharray="4 2.500" fill="none"/>
    <path d="M1614.9 641.300V733M1614.900 742V758" stroke="#222" stroke-width="1.0" fill="none"/>
    <path d="M1614.9 758V868.500" stroke="#111" stroke-width="2" stroke-dasharray="10.500 5.500" fill="none"/>
    <path d="M1614.9 852V868.600" stroke="#111" stroke-width="2" fill="none"/>
    <path d="M1537.5 603.400H1595" stroke="#111" stroke-width="1.400" fill="none"/>
    <path d="M1615.5 603.400l-25-5.200v10.400z" fill="#111"/>
    <text x="1543.5" y="596.5" font-size="21" fill="#111" font-weight="normal" text-anchor="start" textLength="9.5" lengthAdjust="spacingAndGlyphs" font-family="Liberation Sans, sans-serif">D</text>
    <path d="M1550.3 867.700H1595" stroke="#111" stroke-width="1.400" fill="none"/>
    <path d="M1614.5 867.700l-23.500-4.800v9.600z" fill="#111"/>
    <text x="1555.3" y="890.2" font-size="21" fill="#111" font-weight="normal" text-anchor="start" textLength="9.7" lengthAdjust="spacingAndGlyphs" font-family="Liberation Sans, sans-serif">D</text>
    <path d="M1588.3 641.300H1614.900M1588.300 641.300V755" stroke="#222" stroke-width="1.0" fill="none"/>
    <circle cx="1588.3" cy="641.3" r="1.2" fill="#111"/>
    <path d="M1614.5 641.300l-8-1.500v3z" fill="#111"/>
    <text x="1613.3" y="640.3" font-size="15" fill="#111" font-weight="normal" text-anchor="start" textLength="22" lengthAdjust="spacingAndGlyphs" transform="rotate(-90 1613.3 640.3)" font-family="Liberation Sans, sans-serif">4,5</text>
    <text x="1585.7" y="639.2" font-size="14" fill="#111" font-weight="normal" text-anchor="start" textLength="6.7" lengthAdjust="spacingAndGlyphs" transform="rotate(-90 1585.7 639.2)" font-family="Liberation Sans, sans-serif">0</text>
    <circle cx="1614.8" cy="737.4" r="3.4" fill="#fff" stroke="#111" stroke-width="2.5"/>
    <path d="M1596 737.400H1611M1619 737.400H1714M1735 737.400H1793.200" stroke="#222" stroke-width="1.0" fill="none"/>
    <path d="M1724.6 675V745" stroke="#111" stroke-width="1.300" fill="none"/>
    <path d="M1724.6 761l-5-23.800h10z" fill="#111"/>
    <text x="1730.2" y="698.6" font-size="21.6" fill="#111" font-weight="normal" text-anchor="start" textLength="9.8" lengthAdjust="spacingAndGlyphs" font-family="Liberation Sans, sans-serif">A</text>
    <path d="M1724 761H1793.200" stroke="#222" stroke-width="1.0" fill="none"/>
    <path d="M1793.2 737.400V818.600M1718.400 801.200H1793.200M1718.400 818.600H1793.200" stroke="#333" stroke-width="1.0" fill="none"/>
    <circle cx="1793.2" cy="761" r="1.2" fill="#111"/>
    <path d="M1793.2 737.400l-1.700 10h3.400zM1793.200 801l-1.600-9h3.200zM1793.200 818.400l-1.600-9h3.200z" fill="#111"/>
    <text x="1795.8" y="735.4" font-size="15.4" fill="#111" font-weight="normal" text-anchor="start" textLength="6.2" lengthAdjust="spacingAndGlyphs" font-family="Liberation Sans, sans-serif">4</text>
    <text x="1795.8" y="758.7" font-size="13.5" fill="#111" font-weight="normal" text-anchor="start" textLength="6.2" lengthAdjust="spacingAndGlyphs" font-family="Liberation Sans, sans-serif">0</text>
    <text x="1795.8" y="798.9" font-size="15.4" fill="#111" font-weight="normal" text-anchor="start" textLength="28" lengthAdjust="spacingAndGlyphs" font-family="Liberation Sans, sans-serif">6,75</text>
    <text x="1795.8" y="816.9" font-size="15.4" fill="#111" font-weight="normal" text-anchor="start" textLength="28" lengthAdjust="spacingAndGlyphs" font-family="Liberation Sans, sans-serif">9,75</text>
    <path d="M1750.7 778.400V801M1750.700 818.600V858.800" stroke="#222" stroke-width="1.0" fill="none"/>
    <path d="M1750.7 801l-1.600-10h3.200zM1750.700 818.600l-1.600 10h3.200z" fill="#111"/>
    <text x="1748.6" y="859.4" font-size="14.5" fill="#111" font-weight="normal" text-anchor="start" textLength="15.4" lengthAdjust="spacingAndGlyphs" transform="rotate(-90 1748.6 859.4)" font-family="Liberation Sans, sans-serif">(3)</text>
    <path d="M1591.2 900.600H1692M1588.700 930.800H1694.700" stroke="#222" stroke-width="1.0" fill="none"/>
    <path d="M1591.2 900.600l10-1.800v3.600zM1692 900.600l-10-1.800v3.600zM1588.700 930.800l10-1.800v3.600zM1694.700 930.800l-10-1.800v3.600z" fill="#111"/>
    <text x="1613" y="896.5" font-size="15.5" fill="#111" font-weight="normal" text-anchor="start" textLength="26" lengthAdjust="spacingAndGlyphs" transform="rotate(-3 1613 896.5)" font-family="Liberation Sans, sans-serif">Ø17</text>
    <text x="1640.5" y="889.5" font-size="9.5" fill="#111" font-weight="bold" text-anchor="start" textLength="19.5" lengthAdjust="spacingAndGlyphs" transform="rotate(-3 1640.5 889.5)" font-family="Liberation Sans, sans-serif">+0.1</text>
    <text x="1616.7" y="928" font-size="15.5" fill="#111" font-weight="normal" text-anchor="start" textLength="25.5" lengthAdjust="spacingAndGlyphs" font-family="Liberation Sans, sans-serif">Ø18</text>
    <text x="1650.5" y="928" font-size="15.5" fill="#111" font-weight="normal" text-anchor="start" textLength="24" lengthAdjust="spacingAndGlyphs" font-family="Liberation Sans, sans-serif">D10</text>
    <path d="M1796.8 817.500L1788.400 827 1806.400 825Z" fill="#4cac33"/>
    <path d="M1797.9 825.500L1800.500 848.500" stroke="#4cac33" stroke-width="1.300" fill="none"/>
    <circle cx="1803.6" cy="867.6" r="19.4" fill="#fff" stroke="#4cac33" stroke-width="1.500"/>
    <text x="1803.8" y="872.2" font-size="12.500" fill="#4cac33" font-weight="bold" text-anchor="middle" textLength="30" lengthAdjust="spacingAndGlyphs" font-family="DejaVu Serif, Liberation Serif, serif">1060</text>
    <text x="1902.3" y="707" font-size="15" fill="#111" font-weight="normal" text-anchor="start" textLength="18" lengthAdjust="spacingAndGlyphs" transform="rotate(-80 1902.3 707)" font-family="Liberation Sans, sans-serif">Ø1</text>
  </svg>
  
  <div class="a" style="left:0;top:0;width:1105px;height:25px;background:linear-gradient(#fafafa 80%,#fff)"></div>
  <div class="t dj" style="left:5px;top:8px;font-size:9px;color:#d11339;transform:scaleX(.9)">10</div>
  <div class="t dj" style="left:25.5px;top:8px;font-size:9px;color:#d11339;transform:scaleX(.87)">10+</div>
  <div class="a" style="left:46px;top:1px;width:23px;height:22px;background:#4b4b4b;border:1px solid #3a3a3a"></div>
  <svg class="a" style="left:49px;top:3.5px" width="17" height="17" viewBox="0 0 17 17"><circle cx="8.5" cy="8.5" r="7" fill="#fff" stroke="#d11339" stroke-width="1.600"/><text x="8.400" y="11.300" font-size="7.500" font-weight="bold" fill="#d11339" text-anchor="middle" font-family="DejaVu Sans, sans-serif" textLength="9" lengthAdjust="spacingAndGlyphs">10</text></svg>
  <div class="a" style="left:73px;top:2px;width:1px;height:22px;background:#efefef"></div>
  <svg class="a" style="left:80px;top:4px" width="16" height="16" viewBox="0 0 16 16"><path d="M2.500 0.500h7l3 3v11.500h-10z" fill="#f6f6f6" stroke="#d5d5d5"/><path d="M0.500 8.500h9v5h-9z" fill="#ececec" stroke="#cfcfcf" stroke-width="0.700"/><rect x="8" y="9" width="7" height="4" fill="#e01a3c"/><rect x="9" y="13" width="5" height="2" fill="#bdbdbd"/></svg>
  <svg class="a" style="left:101px;top:4px" width="16" height="16" viewBox="0 0 16 16"><path d="M3 0.500h10v5h-10z" fill="#f6f6f6" stroke="#d5d5d5"/><path d="M0.500 5.500h15v7h-15z" fill="#e8e8e8" stroke="#cfcfcf" stroke-width="0.700"/><rect x="3" y="6" width="10" height="6" fill="#e01a3c"/><rect x="2" y="12.500" width="12" height="2.500" fill="#c9c9c9"/></svg>
  <svg class="a" style="left:121px;top:10px" width="7" height="4" viewBox="0 0 7 4"><path d="M0 0h7L3.500 4z" fill="#222"/></svg>
  <div class="a" style="left:133px;top:2px;width:1px;height:22px;background:#e3e3e3"></div>
  <svg class="a" style="left:139px;top:4px" width="17" height="16" viewBox="0 0 17 16"><path d="M0.500 0.500h8l3.500 3.500v11.500h-11.500z" fill="#e4e4e4" stroke="#d2d2d2"/><path d="M6 10l5 4 5-3-5-3z" fill="#dadada" stroke="#c4c4c4" stroke-width="0.800"/></svg>
  <div class="t" id="pg11" style="left:162.5px;top:6px;font-size:12px;color:#222;letter-spacing:-0.2px">1 / 1</div>
  <svg class="a" style="left:192px;top:4px" width="17" height="16" viewBox="0 0 17 16"><path d="M5 0.500h8l3.500 3.500v11.500h-11.500z" fill="#e4e4e4" stroke="#d2d2d2"/><path d="M0.500 11l5 3.500 5-3-5-3z" fill="#dadada" stroke="#c4c4c4" stroke-width="0.800"/></svg>
  <div class="a" style="left:215px;top:2px;width:1px;height:22px;background:#e3e3e3"></div>
  <svg class="a" style="left:222px;top:5px" width="14" height="15" viewBox="0 0 14 15"><path d="M0.500 3.500h7l2 2v9h-9z" fill="#cfcfcf" stroke="#c2c2c2"/><path d="M4.500 0.500h6l3 3v9h-9z" fill="#d8d8d8" stroke="#c6c6c6"/></svg>
  <div class="a" style="left:243px;top:2px;width:1px;height:22px;background:#e3e3e3"></div>
  <svg class="a" style="left:250px;top:6px" width="16" height="13" viewBox="0 0 16 13"><rect x="0.500" y="0.500" width="15" height="12" fill="#ffd23a" stroke="#e0a800"/><path d="M2.500 4h4M2.500 6.500h7" stroke="#e87a00" stroke-width="1.600"/><path d="M8 4h5" stroke="#fff1b8" stroke-width="1.400"/></svg>

  
  <div class="a" style="left:0;top:418px;width:1105px;height:24px;background:linear-gradient(#fff,#f5f5f5)"></div>
  <div class="a" style="left:1px;top:422px;width:91px;height:17px;background:#fff;border:1px solid #cfcfcf"></div>
  <div class="t" id="std2" style="left:4px;top:426px;font-size:10px;color:#222;transform:scaleX(.93)">Standard</div>
  <svg class="a" style="left:80px;top:429px" width="7" height="4" viewBox="0 0 7 4"><path d="M0 0h7L3.500 4z" fill="#222"/></svg>
  <svg class="a" style="left:97px;top:426px" width="5" height="9" viewBox="0 0 5 9"><path d="M5 0v9L0 4.500z" fill="#dedede"/></svg>
  <div class="a" style="left:563px;top:426px;width:224px;height:9px;background:#d8d8d8"></div>
  <svg class="a" style="left:842px;top:426px" width="5" height="9" viewBox="0 0 5 9"><path d="M0 0v9L5 4.500z" fill="#dedede"/></svg>
  <div class="a" style="left:853px;top:422px;width:17px;height:17px;background:#f4f4f4;border:1px solid #cfcfcf"></div>
  <div class="t" style="left:860px;top:425px;font-size:10px;font-weight:bold;font-style:italic;color:#e01a3c;font-family:'Liberation Serif',serif">i</div>
  <div class="a" style="left:871px;top:422px;width:17px;height:17px;background:#f4f4f4;border:1px solid #cfcfcf"></div>
  <svg class="a" style="left:874px;top:425px" width="12" height="11" viewBox="0 0 12 11"><path d="M0.500 5.500L6 0.500V3.500H11.500V7.500H6V10.500Z" fill="#2f6fd6" stroke="#1c4aa0" stroke-width="0.700"/></svg>
  <div class="a" style="left:889px;top:422px;width:18px;height:17px;background:#f4f4f4;border:1px solid #cfcfcf"></div>
  <svg class="a" style="left:893px;top:425.5px" width="10" height="10" viewBox="0 0 10 10"><rect x="0.500" y="0.500" width="9" height="9" fill="#fff" stroke="#333"/><rect x="2.500" y="2.500" width="5" height="5" fill="#3fa535"/></svg>
  <div class="a" style="left:908px;top:422px;width:46px;height:17px;background:#fff;border:1px solid #cfcfcf"></div>
  <div class="t" id="z19" style="left:911px;top:425.5px;font-size:10px;color:#222">19%</div>
  <svg class="a" style="left:942px;top:429px" width="7" height="4" viewBox="0 0 7 4"><path d="M0 0h7L3.500 4z" fill="#222"/></svg>
  <div class="a" style="left:955px;top:423px;width:14px;height:15px;background:#fdfdfd;border:1px solid #c4c4c4"></div>
  <div class="a" style="left:958px;top:429.5px;width:8px;height:2px;background:#111"></div>
  <div class="a" style="left:971.5px;top:429.5px;width:2px;height:2px;background:#e01a3c"></div>
  <div class="a" style="left:974px;top:422px;width:9px;height:17px;background:#fbfbfb;border:1px solid #d0d0d0"></div>
  <div class="a" style="left:983px;top:430px;width:87px;height:1px;background:#c9c9c9"></div>
  <div class="a" style="left:1019px;top:426px;width:1px;height:9px;background:#c4c4c4"></div>
  <div class="a" style="left:1071px;top:423px;width:14px;height:15px;background:#fdfdfd;border:1px solid #c4c4c4"></div>
  <div class="a" style="left:1074px;top:429.5px;width:8px;height:2px;background:#111"></div>
  <div class="a" style="left:1077px;top:426.5px;width:2px;height:8px;background:#111"></div>
  <div class="a" style="left:1087px;top:422px;width:16px;height:17px;background:#f4f4f4;border:1px solid #cfcfcf"></div>
  <div class="a" style="left:1091px;top:426px;width:8px;height:9px;background:#1c4fa8"></div>
  <!-- v scrollbar -->
  <div class="a" style="left:1091px;top:155px;width:9px;height:57px;background:#d4d4d4"></div>
  <svg class="a" style="left:1090px;top:29px" width="11" height="6" viewBox="0 0 11 6"><path d="M0 6h11L5.500 0z" fill="#e4e4e4"/></svg>
  <svg class="a" style="left:1090px;top:412px" width="11" height="6" viewBox="0 0 11 6"><path d="M0 0h11L5.500 6z" fill="#e4e4e4"/></svg>
  <!-- tabs -->
  <div class="ptab" style="left:5px;top:441px;width:86px;height:21px"></div>
  <svg class="a" style="left:8px;top:444px" width="16" height="15" viewBox="0 0 16 15"><rect x="0.500" y="1.500" width="15" height="12" rx="1" fill="#f1e4e6" stroke="#e5c1c8"/><path d="M2 11l4-5 3 3 2-2 3 4z" fill="#d9aab3"/><rect x="3" y="3.500" width="6" height="2" fill="#fff"/></svg>
  <div class="t" id="zeich" style="margin-top:1px;left:28px;top:446px;font-size:12px;color:#fff">Zeichnung</div>
  <div class="gtab" style="left:92px;top:441px;width:83px;height:21px"></div>
  <svg class="a" style="left:95px;top:443px" width="16" height="17" viewBox="0 0 16 17"><path d="M1 2l7-1.500v13l-7 1.500z" fill="#e0241c"/><path d="M8 0.500l3 2v12l-3-1z" fill="#a81610"/><circle cx="10" cy="11" r="5" fill="#2b2aa0"/><circle cx="8.700" cy="9.500" r="1.800" fill="#5b5ad0"/></svg>
  <div class="t" id="v3d" style="margin-top:1px;left:114px;top:446px;font-size:12px;color:#222">3D-Viewer</div>
  <div class="gtab" style="left:178px;top:441px;width:88px;height:21px"></div>
  <svg class="a" style="left:180px;top:445px" width="16" height="14" viewBox="0 0 16 14"><ellipse cx="7.500" cy="5.500" rx="6.800" ry="4.600" fill="#f6f6f6" stroke="#ececec" stroke-width="1.200"/><path d="M9 8.500c2 2 4 1.500 5.500 0.500l0.500 3.500-3-1.500" fill="#f6f6f6" stroke="#ececec"/></svg>
  <div class="t" id="phin" style="margin-top:1px;left:200px;top:446px;font-size:12px;color:#222">Prüfhinweis</div>
  <div class="gtab" style="left:269px;top:441px;width:90px;height:21px"></div>
  <svg class="a" style="left:272px;top:443px" width="13" height="17" viewBox="0 0 13 17"><path d="M0.500 0.500h8l4 4v12h-12z" fill="#fafafa" stroke="#cfcfcf"/><path d="M8.500 0.500v4h4" fill="none" stroke="#cfcfcf"/></svg>
  <div class="t" id="doku" style="margin-top:1px;left:291px;top:446px;font-size:12px;color:#222">Dokumente</div>
  <svg class="a" style="left:1089.5px;top:448.5px" width="9" height="8" viewBox="0 0 9 8"><path d="M1 0.7L8 7.3M8 0.7L1 7.3" stroke="#17418f" stroke-width="1.7" fill="none"/></svg>

</div>
<!-- SPLITTERS -->
<div class="split" style="left:811px;top:226px;width:4px;height:792px"></div>
<div class="split" style="left:1295px;top:226px;width:4px;height:326px"></div>
<div class="split" style="left:0;top:552px;width:1920px;height:4px"></div>
<div class="split" style="left:1299px;top:387px;width:621px;height:4px"></div>
<!-- STATUS -->
<div class="a crim" style="left:0;top:1017px;width:1920px;height:2px"></div>
<div id="status" class="a crim" style="left:0;top:1018px;width:1920px;height:22px">
  <div class="t" id="bereit" style="left:4px;top:7px;font-size:12px;color:#fff">Bereit</div>
  <div class="a" style="left:1607px;top:4px;width:17px;height:16px;background:#8a1530"></div>
  <div class="t" style="left:1610px;top:8px;font-size:8.5px;font-weight:bold;color:#fff">DE</div>
  <svg class="a" style="left:1627px;top:3px" width="17" height="17" viewBox="0 0 17 17"><path d="M8.5 1.8l2 4.600 5 0.500-3.800 3.300 1.100 4.900-4.300-2.600-4.300 2.600 1.100-4.900-3.800-3.300 5-0.500z" fill="none" stroke="#fff" stroke-width="1.700" stroke-linejoin="miter"/></svg>
  <div class="t" id="st1" style="left:1650px;top:7px;font-size:12px;color:#fff">Meier, Karl</div>
  <div class="t" id="st2" style="transform:scaleX(.95);left:1714px;top:7px;font-size:12px;color:#fff">IQSNB98</div>
  <div class="t" id="st3" style="left:1767px;top:7px;font-size:12px;color:#fff">plant 001</div>
  <div class="t" id="st4" style="left:1826px;top:7px;font-size:12px;color:#fff">--</div>
  <div class="t" id="st5" style="left:1842px;top:7px;font-size:12px;color:#fff">Produktiv</div>
</div>
</body>
</html>
